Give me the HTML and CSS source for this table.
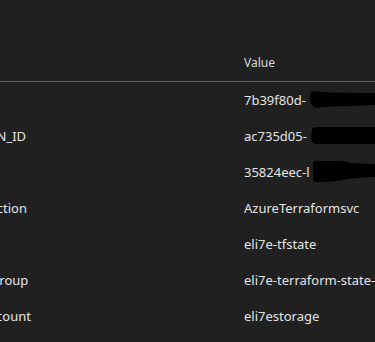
FILE: index.html
```html
<!DOCTYPE html>
<html lang="en">
<head>
  <meta charset="UTF-8">
  <meta name="viewport" content="width=device-width, initial-scale=1.0">
  <title>Variables</title>
  <link rel="stylesheet" href="styles.css">
</head>
<body>
  <div class="vars">
    <div class="head">
      <div class="cell">Name</div>
      <div class="cell">Value</div>
    </div>
    <div class="row">
      <div class="cell key">ARM_CLIENT_ID</div>
      <div class="cell val">7b39f80d-<svg class="redact" width="68" height="20" viewBox="0 0 68 20"><path d="M2 6 Q1 2 6 1 L14 2 Q30 3 68 3 L68 15 Q40 16 14 17 Q9 19 6 17 Q1 14 2 6 Z" fill="#000"/></svg></div>
    </div>
    <div class="row">
      <div class="cell key">ARM_SUBSCRIPTION_ID</div>
      <div class="cell val">ac735d05-<svg class="redact" width="68" height="20" viewBox="0 0 68 20"><path d="M3 4 Q3 1 8 1 L68 1 L68 18 L8 18 Q2 18 2 12 Z" fill="#000"/></svg></div>
    </div>
    <div class="row">
      <div class="cell key">ARM_TENANT_ID</div>
      <div class="cell val">35824eec-l<svg class="redact" width="66" height="22" viewBox="0 0 66 22"><path d="M1 3 Q1 0 5 0 L30 0 Q40 3 66 3 L66 16 Q40 17 30 19 Q20 21 5 21 Q1 21 1 18 Z" fill="#000"/></svg></div>
    </div>
    <div class="row">
      <div class="cell key">azureServiceConnection</div>
      <div class="cell val">AzureTerraformsvc</div>
    </div>
    <div class="row">
      <div class="cell key">container_name</div>
      <div class="cell val">eli7e-tfstate</div>
    </div>
    <div class="row">
      <div class="cell key">storage_resource_group</div>
      <div class="cell val">eli7e-terraform-state-rg</div>
    </div>
    <div class="row">
      <div class="cell key">remote_storage_account</div>
      <div class="cell val">eli7estorage</div>
    </div>
  </div>
</body>
</html>
```

FILE: styles.css
```css
html, body {
  margin: 0;
  height: 100%;
  background: #202020;
  overflow: hidden;
}
body {
  font-family: "Segoe UI", "Noto Sans", sans-serif;
  color: #e4e4e4;
  font-size: 13px;
}
/* table is wider than the pane; the name column runs off the left edge */
.vars {
  margin-left: -120px;
  width: 600px;
}
.head, .row {
  display: grid;
  grid-template-columns: 364px 1fr;
  align-items: center;
}
.head {
  height: 82px;
  align-items: end;
  padding-bottom: 10px;
  border-bottom: 1px solid #5c5c5c;
  font-size: 12px;
  color: #d8d8d8;
  box-sizing: border-box;
}
.row {
  height: 36px;
}
.cell {
  white-space: nowrap;
}
.val {
  display: flex;
  align-items: center;
}
.redact {
  display: block;
  flex: none;
  margin-left: 2px;
}
```
